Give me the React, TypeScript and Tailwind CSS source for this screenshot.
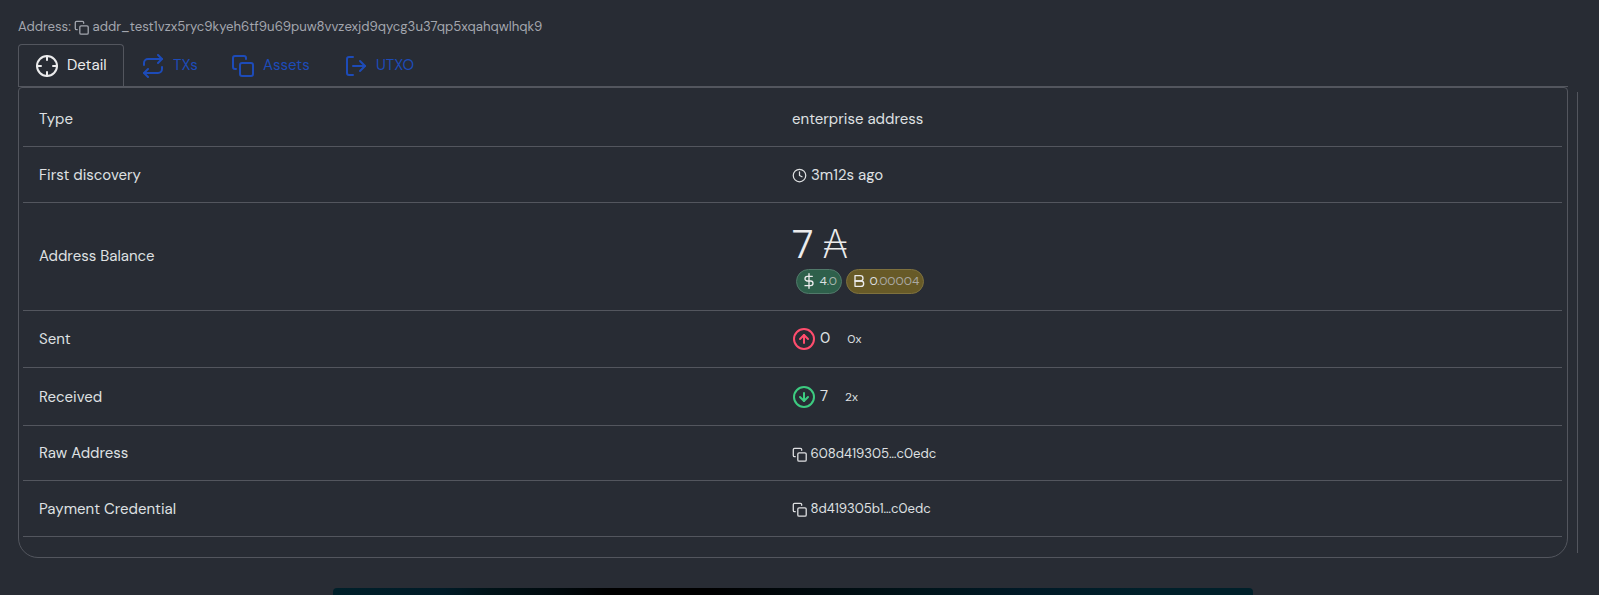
import type { ReactNode } from "react";
import {
  FiArrowDownCircle,
  FiArrowUpCircle,
  FiBold,
  FiClock,
  FiCopy,
  FiCrosshair,
  FiDollarSign,
  FiLogOut,
  FiRepeat,
} from "react-icons/fi";

function Row({ label, height, children }: { label: ReactNode; height: string; children: ReactNode }) {
  return (
    <div className={`grid grid-cols-[753px_1fr] items-center border-b border-[#53565e] px-4 ${height}`}>
      <div>{label}</div>
      <div>{children}</div>
    </div>
  );
}

function Tab({ icon, label, width }: { icon: ReactNode; label: string; width: string }) {
  return (
    <div className={`flex items-center gap-2 pt-px text-[#1d4bb8] ${width}`}>
      {icon}
      <span className="-mt-0.5 whitespace-nowrap">{label}</span>
    </div>
  );
}

function Hash({ value }: { value: string }) {
  return (
    <div className="flex items-center gap-[3px] text-[13.16px]">
      <FiCopy className="mt-0.5 size-[15.5px]" />
      <span>{value}</span>
    </div>
  );
}

export default function App() {
  return (
    <div className="flex h-[595px] w-[1599px] flex-col overflow-hidden bg-[#282c34] pl-[18px] font-['DM_Sans','Inter',sans-serif] text-[15px] leading-5 text-[#dfe0e2]">
      <div className="mt-[17px] flex h-5 shrink-0 items-center text-[13.16px] text-[#a3a6ae]">
        <span className="w-[56px]">Address:</span>
        <FiCopy className="mt-px size-[15.5px]" />
        <span className="ml-[3px]">addr_test1vzx5ryc9kyeh6tf9u69puw8vvzexjd9qycg3u37qp5xqahqwlhqk9</span>
      </div>

      <div className="mt-[7px] flex h-[43px] w-[1550px] shrink-0 border-b border-[#53565e]">
        <div className="flex w-[106px] items-center gap-2 rounded-t border border-b-0 border-[#53565e] pl-4 text-[#ebebec]">
          <FiCrosshair className="mt-px size-6" />
          <span className="-mt-0.5">Detail</span>
        </div>
        <Tab icon={<FiRepeat className="size-6" />} label="TXs" width="ml-[17px] w-[90px]" />
        <Tab icon={<FiCopy className="size-6" />} label="Assets" width="w-[113px]" />
        <Tab icon={<FiLogOut className="size-6" />} label="UTXO" width="w-[90px]" />
      </div>

      <div className="flex h-[471px] shrink-0">
        <div className="w-[1550px] rounded-t rounded-b-[20px] border border-[#53565e] pr-[5px] pl-1">
          <Row label="Type" height="h-[59px] pt-1">enterprise address</Row>
          <Row label="First discovery" height="h-[56px]">
            <div className="flex items-center gap-1">
              <FiClock className="mt-px size-[15px]" />
              <span>3m12s ago</span>
            </div>
          </Row>
          <Row label={<div className="-mt-0.5">Address Balance</div>} height="h-[108px]">
            <div className="mt-1 text-[40px] leading-10 font-[340] text-[#ebebec]">
              7 <span className="-ml-0.5 text-[39px] font-[250]">₳</span>
            </div>
            <div className="mt-1 flex gap-1 pl-1 text-xs">
              <div className="flex h-[25px] w-[46px] items-center gap-[3px] rounded-full border border-[#51796a] bg-[#2e604b] pl-[3.5px]">
                <FiDollarSign className="size-4 text-[#ebebec]" />
                <span className="-mt-px">4<span className="text-[#a9b8b1]">.0</span></span>
              </div>
              <div className="flex h-[25px] w-[78px] items-center gap-[3px] rounded-full border border-[#7e713e] bg-[#675a27] pl-[3.5px]">
                <FiBold className="size-4 text-[#ebebec]" />
                <span className="-mt-px">0<span className="text-[#aaa9a4]">.00004</span></span>
              </div>
            </div>
          </Row>
          <Row label="Sent" height="h-[57px]">
            <div className="flex items-center">
              <FiArrowUpCircle className="size-6 text-[#ff4d6d]" />
              <span className="-mt-0.5 ml-1">0</span>
              <span className="ml-[17px] text-xs">0x</span>
            </div>
          </Row>
          <Row label="Received" height="h-[58px]">
            <div className="flex items-center">
              <FiArrowDownCircle className="size-6 text-[#3dcb80]" />
              <span className="-mt-0.5 ml-1">7</span>
              <span className="mt-px ml-[17px] text-xs">2x</span>
            </div>
          </Row>
          <Row label="Raw Address" height="h-[55px]"><div className="pt-px"><Hash value="608d419305…c0edc" /></div></Row>
          <Row label="Payment Credential" height="h-[56px]"><Hash value="8d419305b1…c0edc" /></Row>
        </div>
        <div className="mt-[5px] ml-[9px] h-[461px] w-px bg-[#53565e]" />
      </div>
      <div className="mt-[30px] ml-[315px] h-10 w-[920px] shrink-0 rounded-t bg-[linear-gradient(90deg,#00202a_0%,#001b27_12%,#001318_17%,#000a0e_24%,#000_30%,#000_41%,#00070a_49%,#00141a_64%,#001926_75%,#00202a_88%)]" />
    </div>
  );
}
